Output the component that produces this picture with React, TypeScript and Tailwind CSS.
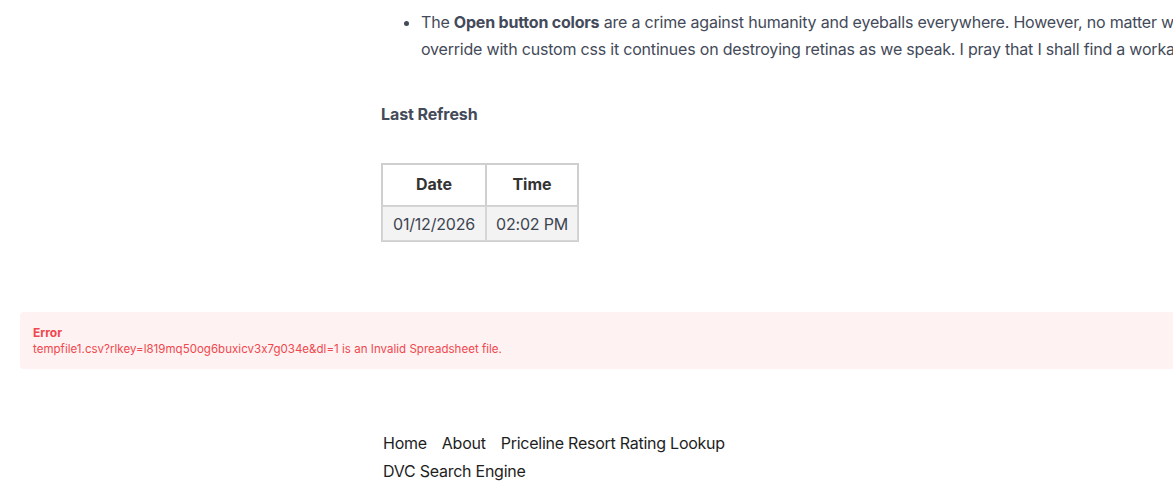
import React from "react";

export default function App() {
  return (
    <div
      className="w-[1173px] h-[486px] overflow-hidden bg-white relative"
      style={{ fontFamily: "Inter, 'Noto Sans', sans-serif" }}
    >
      <div className="pl-[381px] w-[1400px]">
        <ul className="list-disc pl-[40px] pt-[9px] text-[16px] leading-[27px] tracking-[-0.2px] text-[#434a59] marker:text-[#434a59]">
          <li>
            The <strong className="font-bold">Open button colors</strong> are a crime against humanity and eyeballs everywhere. However, no matter what I
            <br />
            override with custom css it continues on destroying retinas as we speak. I pray that I shall find a workaround soon.
          </li>
        </ul>
        <p className="mt-[38px] text-[16px] leading-[27px] font-bold tracking-[-0.1px] text-[#434a59]">Last Refresh</p>
        <table className="mt-[35px] border-separate border-spacing-0 border border-[#cfcfcf] text-[16px] text-[#333]">
          <thead>
            <tr>
              <th className="w-[104px] h-[42px] border border-[#cfcfcf] font-bold text-center pb-[2px]">Date</th>
              <th className="w-[92px] h-[42px] border border-[#cfcfcf] font-bold text-center pb-[2px]">Time</th>
            </tr>
          </thead>
          <tbody>
            <tr className="bg-[#f3f3f3]">
              <td className="h-[35px] border border-[#d6d6d6] text-center text-[#3d4452] tracking-[-0.2px]">01/12/2026</td>
              <td className="h-[35px] border border-[#d6d6d6] text-center text-[#3d4452] tracking-[-0.2px]">02:02 PM</td>
            </tr>
          </tbody>
        </table>
      </div>
      <div className="mt-[70px] ml-[20px] w-[1200px] h-[57px] rounded-[4px] bg-[#fef2f2] px-[13px] pt-[13px] text-[#f0474e] [font-feature-settings:'calt'_0]">
        <div className="text-[12px] leading-[16px] font-bold">Error</div>
        <div className="text-[11.5px] leading-[16px] tracking-[0.03px]">tempfile1.csv?rlkey=l819mq50og6buxicv3x7g034e&amp;dl=1 is an Invalid Spreadsheet file.</div>
      </div>
      <nav className="mt-[60px] ml-[383px] w-[400px] flex flex-wrap gap-x-[15px] text-[16px] leading-[28px] tracking-[-0.25px] text-[#1e1e1e]">
        <span>Home</span>
        <span>About</span>
        <span>Priceline Resort Rating Lookup</span>
        <span>DVC Search Engine</span>
      </nav>
    </div>
  );
}
